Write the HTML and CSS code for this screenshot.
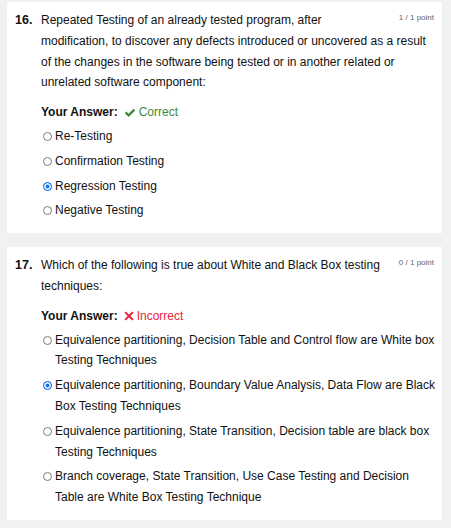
FILE: index.html
```html
<!DOCTYPE html>
<html>
<head>
<meta charset="utf-8">
<link rel="stylesheet" href="styles.css">
</head>
<body>
<div class="page">
  <div class="card">
    <div class="qhead">
      <div class="num">16.</div>
      <div class="qbody">
        <div class="points">1 / 1 point</div>
        <div class="qtext">Repeated Testing of an already tested program, after modification, to discover any defects introduced or uncovered as a result of the changes in the software being tested or in another related or unrelated software component:</div>
        <div class="answer">
          <span class="alabel">Your Answer:</span>
          <svg class="icon" width="12" height="10" viewBox="0 0 12 10"><path d="M0.8 5.2 L2.4 3.6 L4.6 5.8 L9.6 0.8 L11.2 2.4 L4.6 9 Z" fill="#3d8b37"/></svg>
          <span class="correct">Correct</span>
        </div>
        <div class="options">
          <div class="opt"><span class="radio"></span><span class="otext">Re-Testing</span></div>
          <div class="opt"><span class="radio"></span><span class="otext">Confirmation Testing</span></div>
          <div class="opt"><span class="radio on"></span><span class="otext">Regression Testing</span></div>
          <div class="opt"><span class="radio"></span><span class="otext">Negative Testing</span></div>
        </div>
      </div>
    </div>
  </div>
  <div class="card">
    <div class="qhead">
      <div class="num">17.</div>
      <div class="qbody">
        <div class="points">0 / 1 point</div>
        <div class="qtext">Which of the following is true about White and Black Box testing techniques:</div>
        <div class="answer">
          <span class="alabel">Your Answer:</span>
          <svg class="icon" width="10" height="10" viewBox="0 0 10 10"><path d="M1.8 0.4 L5 3.6 L8.2 0.4 L9.6 1.8 L6.4 5 L9.6 8.2 L8.2 9.6 L5 6.4 L1.8 9.6 L0.4 8.2 L3.6 5 L0.4 1.8 Z" fill="#e8253f"/></svg>
          <span class="incorrect">Incorrect</span>
        </div>
        <div class="options">
          <div class="opt"><span class="radio"></span><span class="otext">Equivalence partitioning, Decision Table and Control flow are White box Testing Techniques</span></div>
          <div class="opt"><span class="radio on"></span><span class="otext">Equivalence partitioning, Boundary Value Analysis, Data Flow are Black Box Testing Techniques</span></div>
          <div class="opt"><span class="radio"></span><span class="otext">Equivalence partitioning, State Transition, Decision table are black box Testing Techniques</span></div>
          <div class="opt"><span class="radio"></span><span class="otext">Branch coverage, State Transition, Use Case Testing and Decision Table are White Box Testing Technique</span></div>
        </div>
      </div>
    </div>
  </div>
</div>
</body>
</html>
```
FILE: styles.css
```css
html, body {
  margin: 0;
  padding: 0;
  background: #f1f1f1;
}
body {
  font-family: "Liberation Sans", Arial, sans-serif;
  font-size: 12px;
  color: #111;
}
.page {
  padding: 2px 9px 0 7px;
  display: flex;
  flex-direction: column;
  gap: 14px;
}
.card {
  background: #fff;
  padding: 8px 4px 12px 8px;
}
.qhead {
  display: flex;
}
.num {
  width: 26px;
  flex: none;
  font-weight: bold;
  line-height: 20.8px;
  font-size: 12.5px;
}
.qbody {
  flex: 1;
  line-height: 20.8px;
}
.qtext {
  padding-right: 2px;
}
.points {
  float: right;
  font-size: 8px;
  line-height: 12px;
  color: #666;
  padding-left: 8px;
  padding-top: 2px;
  margin-right: 4px;
}
.answer {
  margin-top: 9px;
  display: flex;
  align-items: center;
}
.alabel {
  font-weight: bold;
  margin-right: 6px;
}
.icon {
  margin-right: 3px;
}
.correct {
  color: #3d8b37;
}
.incorrect {
  color: #e8253f;
}
.options {
  margin-top: 3px;
  display: flex;
  flex-direction: column;
  gap: 4px;
}
.opt {
  display: flex;
  align-items: flex-start;
  padding-left: 2px;
}
.radio {
  flex: none;
  width: 7px;
  height: 7px;
  border: 1px solid #7a7a7a;
  border-radius: 50%;
  margin-top: 6px;
  margin-right: 3px;
  background: #fff;
}
.radio.on {
  border-color: #1a73e8;
  background: #1a73e8;
  box-shadow: inset 0 0 0 1.5px #fff;
}
```
